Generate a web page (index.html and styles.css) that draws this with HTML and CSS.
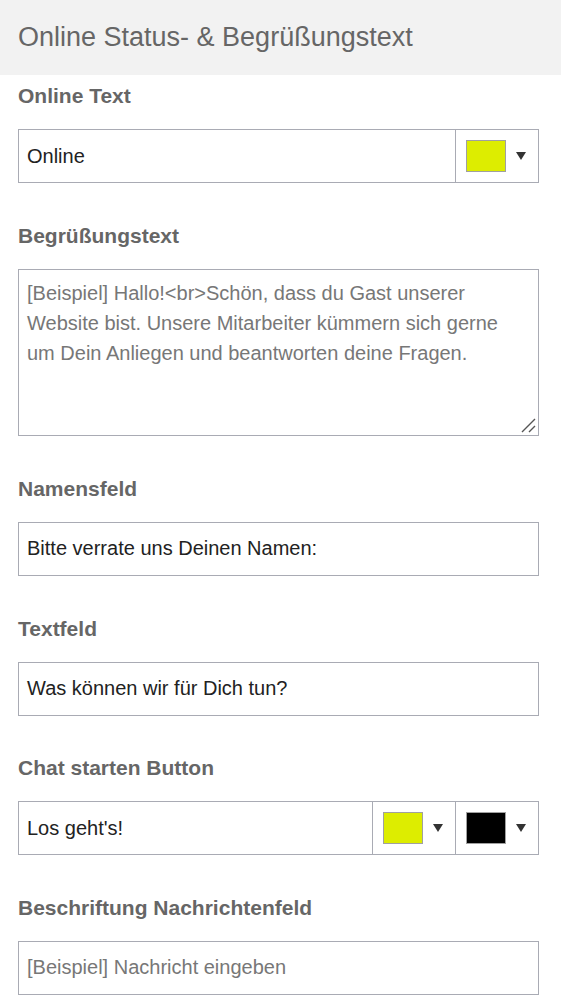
FILE: index.html
```html
<!DOCTYPE html>
<html lang="de">
<head>
<meta charset="utf-8">
<title>Online Status- &amp; Begrüßungstext</title>
<link rel="stylesheet" href="styles.css">
</head>
<body>
<div class="header"><h1 class="title">Online Status- &amp; Begrüßungstext</h1></div>
<div class="form">
  <div class="field first">
    <div class="label">Online Text</div>
    <div class="box">
      <div class="value">Online</div>
      <div class="color"><span class="swatch yellow"></span><svg class="arrow" width="10" height="8" viewBox="0 0 10 8"><polygon points="0,0 10,0 5,8" fill="#333"/></svg></div>
    </div>
  </div>
  <div class="field">
    <div class="label">Begrüßungstext</div>
    <div class="box area">
      <div class="value placeholder">[Beispiel] Hallo!&lt;br&gt;Schön, dass du Gast unserer Website bist. Unsere Mitarbeiter kümmern sich gerne um Dein Anliegen und beantworten deine Fragen.</div>
      <svg class="grip" width="16" height="16" viewBox="0 0 16 16"><path d="M2 15 L15 2 M9 15 L15 9" stroke="#555" stroke-width="1.4" fill="none"/></svg>
    </div>
  </div>
  <div class="field">
    <div class="label">Namensfeld</div>
    <div class="box"><div class="value">Bitte verrate uns Deinen Namen:</div></div>
  </div>
  <div class="field">
    <div class="label">Textfeld</div>
    <div class="box"><div class="value">Was können wir für Dich tun?</div></div>
  </div>
  <div class="field">
    <div class="label">Chat starten Button</div>
    <div class="box">
      <div class="value">Los geht's!</div>
      <div class="color"><span class="swatch yellow"></span><svg class="arrow" width="10" height="8" viewBox="0 0 10 8"><polygon points="0,0 10,0 5,8" fill="#333"/></svg></div>
      <div class="color"><span class="swatch black"></span><svg class="arrow" width="10" height="8" viewBox="0 0 10 8"><polygon points="0,0 10,0 5,8" fill="#333"/></svg></div>
    </div>
  </div>
  <div class="field">
    <div class="label">Beschriftung Nachrichtenfeld</div>
    <div class="box"><div class="value placeholder">[Beispiel] Nachricht eingeben</div></div>
  </div>
</div>
</body>
</html>
```
FILE: styles.css
```css
html, body { margin: 0; padding: 0; background: #fff; }
body { font-family: "Liberation Sans", Arial, sans-serif; color: #222; }
.header { background: #f2f2f2; height: 75px; display: flex; align-items: center; padding: 0 18px; box-sizing: border-box; }
.title { margin: 0; font-weight: normal; font-size: 27px; color: #666; line-height: 1; }
.form { padding: 9px 22px 0 18px; }
.field { margin-top: 40.67px; }
.field.first { margin-top: 0; }
.label { font-size: 21px; font-weight: bold; color: #666; line-height: 24px; margin-bottom: 21px; }
.box { display: flex; height: 54px; border: 1px solid #a9abb4; box-sizing: border-box; align-items: stretch; }
.value { flex: 1; display: flex; align-items: center; padding: 0 8px; font-size: 20px; color: #222; }
.value.placeholder { color: #777; }
.box.area { height: 167.67px; position: relative; }
.box.area .value { display: block; padding: 8px 8px; line-height: 30px; }
.grip { position: absolute; right: 2px; bottom: 2px; }
.color { width: 72px; border-left: 1px solid #a9abb4; display: flex; align-items: center; padding-left: 10px; }
.swatch { width: 40px; height: 32px; box-sizing: border-box; border: 1px solid #a0a0a0; background-clip: padding-box; }
.swatch.yellow { background-color: #dded00; }
.swatch.black { background-color: #000; }
.arrow { margin-left: 10px; display: block; }
```
